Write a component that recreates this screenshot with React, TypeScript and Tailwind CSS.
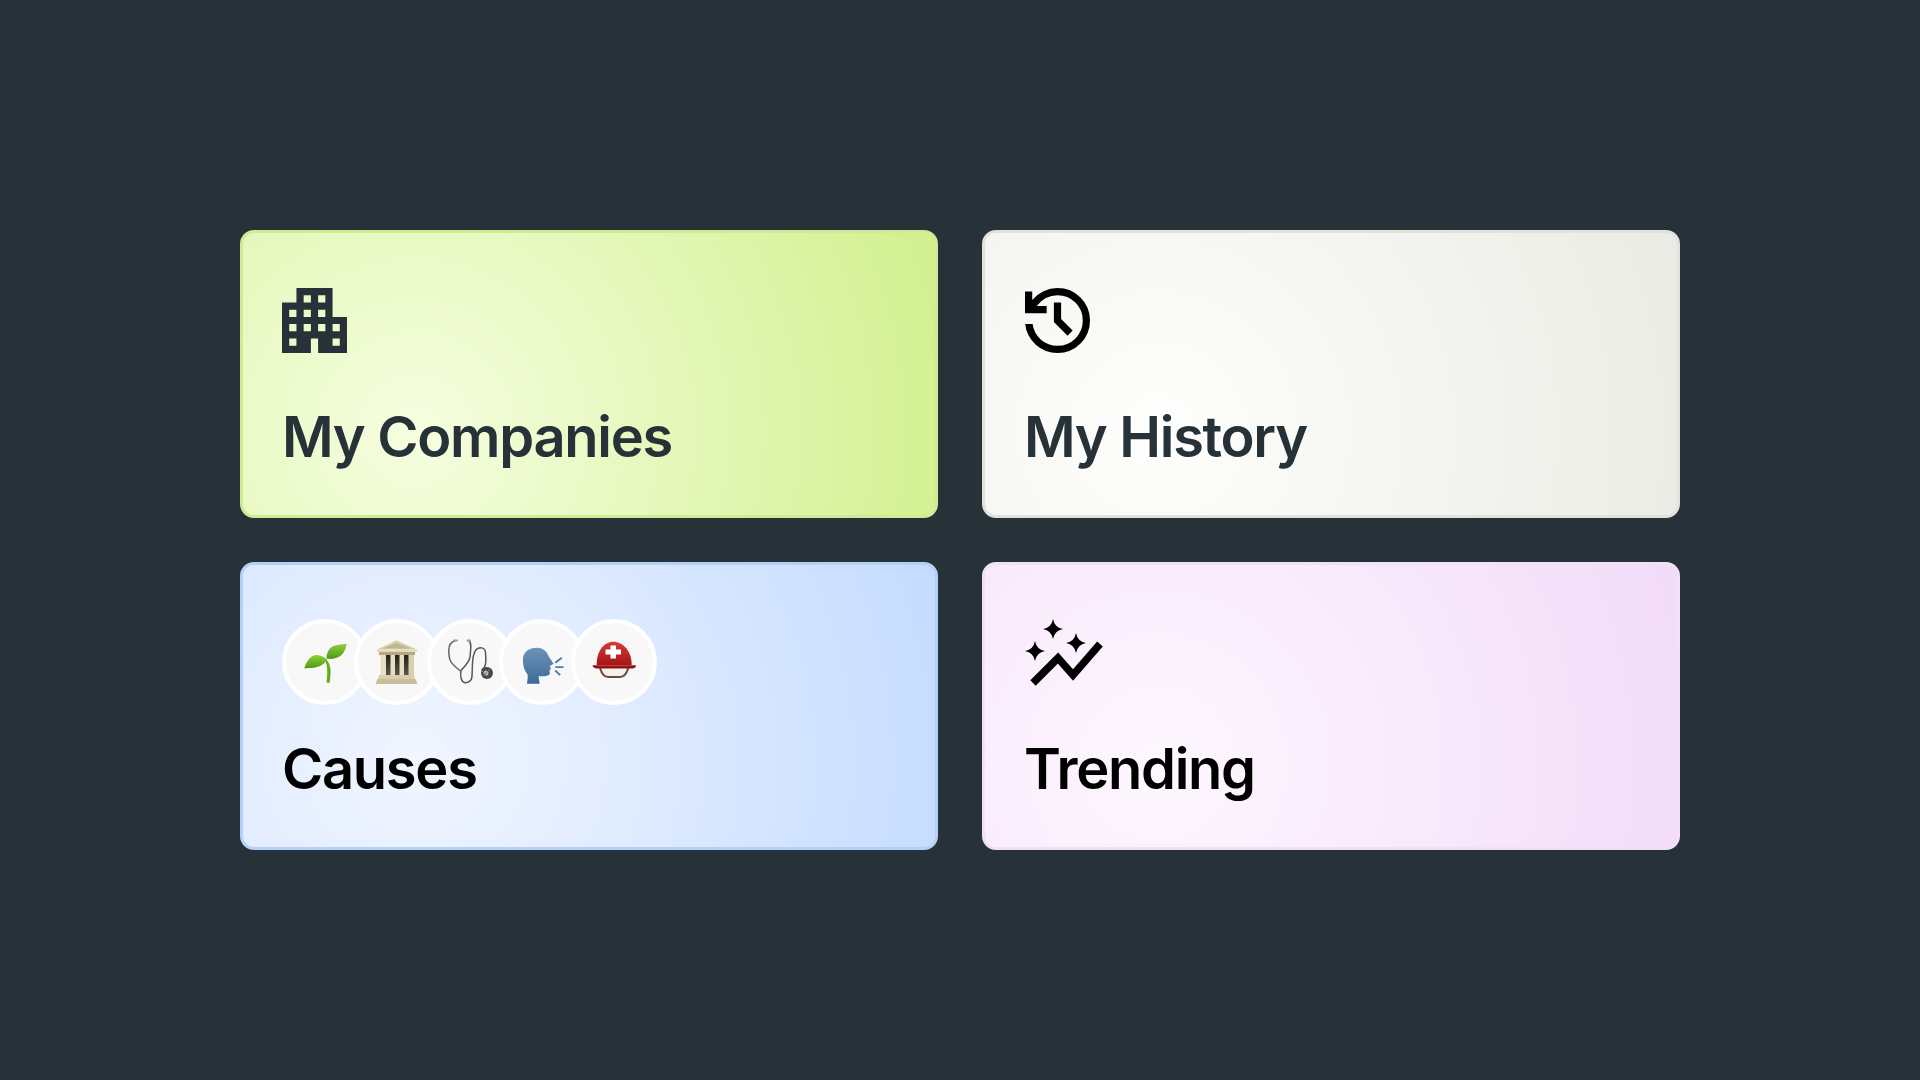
import type { ReactNode } from "react";

const ink = "#263238";

function Building() {
  return (
    <svg viewBox="120 -840 720 720" className="h-[65px] w-[65px]" fill={ink} aria-hidden>
      <path
        fillRule="evenodd"
        d="M120-120v-560h160v-160h400v320h160v400H520v-160h-80v160H120Zm80-80h80v-80h-80v80Zm0-160h80v-80h-80v80Zm0-160h80v-80h-80v80Zm160 160h80v-80h-80v80Zm0-160h80v-80h-80v80Zm0-160h80v-80h-80v80Zm160 320h80v-80h-80v80Zm0-160h80v-80h-80v80Zm0-160h80v-80h-80v80Zm160 480h80v-80h-80v80Zm0-160h80v-80h-80v80Z"
      />
    </svg>
  );
}

function History() {
  return (
    <svg viewBox="120 -840 720 720" className="h-[65px] w-[65px]" fill="#000" aria-hidden>
      <path d="M480-120q-138 0-240.5-91.5T122-440h82q14 104 92.5 172T480-200q117 0 198.5-81.5T760-480q0-117-81.5-198.5T480-760q-69 0-129 32t-101 88h110v80H120v-240h80v94q51-64 124.5-99T480-840q150 0 255 105t105 255q0 150-105 255T480-120Zm112-192L440-464v-216h80v184l128 128-56 56Z" />
    </svg>
  );
}

function Trending() {
  return (
    <svg viewBox="0 0 78 68" className="h-[68px] w-[78px]" aria-hidden>
      <path d="M28 0q1.500 8.500 10 10q-8.500 1.500-10 10q-1.500-8.500-10-10q8.500-1.500 10-10Z" />
      <path d="M10 22q1.500 8.500 10 10q-8.500 1.500-10 10q-1.500-8.500-10-10q8.500-1.500 10-10Z" />
      <path d="M51 14q1.500 8.500 10 10q-8.500 1.500-10 10q-1.500-8.500-10-10q8.500-1.500 10-10Z" />
      <path d="M8 64 33 39 48 56 75 25" fill="none" stroke="#000" strokeWidth="7.500" />
    </svg>
  );
}

function Seedling() {
  return (
    <svg viewBox="0 0 48 48" className="h-12 w-12" aria-hidden>
      <defs>
        <linearGradient id="leaf" x1="0" y1="0" x2="0" y2="1">
          <stop offset="0" stopColor="#8fd03c" />
          <stop offset="1" stopColor="#4c9a10" />
        </linearGradient>
      </defs>
      <path d="M25 21C29 26 30 30 29.500 36C29.300 39 29 42 28.500 45L25.500 44.500C26.500 38 27 28 24 22Z" fill="#62ad18" />
      <path d="M3.300 30.500C5 24 9 18 14 17.200C19 16.500 23 19 26 21.500C24 26 19 28.500 14 29.500C10 30.200 6 30 3.300 30.500Z" fill="url(#leaf)" />
      <path d="M25.500 20.500C25.500 15 28 10 32 8.200C36 6.500 41 6.500 45.700 5.800C45 10 43.500 14.500 40 17.500C36 20.800 30 21.500 25.500 20.500Z" fill="url(#leaf)" />
    </svg>
  );
}

function Bank() {
  return (
    <svg viewBox="0 0 48 48" className="h-12 w-12" aria-hidden>
      <defs>
        <linearGradient id="gap" x1="0" y1="0" x2="0" y2="1">
          <stop offset="0" stopColor="#25211b" />
          <stop offset="1" stopColor="#5c5546" />
        </linearGradient>
      </defs>
      <path d="M23.500 2.500 44 11.500H4Z" fill="#d8cda8" />
      <path d="M23.500 5 37 10.500H10Z" fill="#c2b68f" />
      <rect x="4" y="11.500" width="40" height="2.500" fill="#e3dbbd" />
      <rect x="6" y="14" width="36" height="3" fill="#b3a883" />
      <rect x="8" y="17" width="32" height="20" fill="url(#gap)" />
      <rect x="7.500" y="17" width="5.500" height="20" fill="#e6dfc6" />
      <rect x="17.500" y="17" width="4.500" height="20" fill="#e6dfc6" />
      <rect x="26.500" y="17" width="4.500" height="20" fill="#e6dfc6" />
      <rect x="35.500" y="17" width="5.500" height="20" fill="#d8cfb0" />
      <path d="M6 37H41L42 41H5Z" fill="#d8cfb0" />
      <path d="M4.500 41H42.500L44.500 46H2.500Z" fill="#c9be98" />
    </svg>
  );
}

function Stethoscope() {
  return (
    <svg viewBox="0 0 48 48" className="h-12 w-12" fill="none" strokeLinecap="round" aria-hidden>
      <path d="M9.500 2.500C5 4 2.800 8 2.800 12C2.800 17 3 20 4.500 23C6.500 27 11 30 13.800 32.500" stroke="#63676b" strokeWidth="1.500" />
      <path d="M22.800 2.500C24.500 4 25 6 24.800 9C24.500 13 24.500 17 23.800 20C22.500 25 18 29 15 32.500C14.500 35 14.500 38 15 40C16 43.500 18 45 20 44.800C24 44 26 41 26 38C26.500 30 26 22 27.800 16.500C29 12 32 9.800 34.500 9.800C37.500 9.800 39.500 12 39.500 14.800C40 19 40 23 39.500 26.500C39 29 37.500 30.500 36 31.500" stroke="#55595d" strokeWidth="1.500" />
      <path d="M8 2.500H11M21.500 2.500H24" stroke="#9a9ea2" strokeWidth="2" />
      <circle cx="41" cy="35" r="6" fill="#45484b" />
      <circle cx="40" cy="35" r="2.500" fill="#b9bbbd" />
      <path d="M36 33 41 38M44 31 38 37" stroke="#85888b" strokeWidth="1" />
    </svg>
  );
}

function SpeakingHead() {
  return (
    <svg viewBox="0 0 48 48" className="h-12 w-12" aria-hidden>
      <defs>
        <linearGradient id="head" x1="0" y1="0" x2="0" y2="1">
          <stop offset="0" stopColor="#6f93b9" />
          <stop offset="1" stopColor="#3d6a98" />
        </linearGradient>
      </defs>
      <path
        d="M4.900 21.500C5 14 11 9.800 18.900 9.800C24 9.800 29 13 30.600 18.200L35.600 25.800L31.600 28.200L33 30.500L31.500 33L32 35.500C31.500 38 26 38.500 20.600 38.200L21.600 45.800H8.900C9.500 42 10 39 9.600 36.500C6.500 33 4.800 28 4.900 21.500Z"
        fill="url(#head)"
      />
      <path d="M37.200 24.800 43.900 19.800M37.200 29.200H45.600M37.200 32.500 42.200 37.200" stroke="#4f7aa6" strokeWidth="1.800" fill="none" />
    </svg>
  );
}

function Helmet() {
  return (
    <svg viewBox="0 0 48 48" className="h-12 w-12" aria-hidden>
      <defs>
        <linearGradient id="dome" x1="0" y1="0" x2="0" y2="1">
          <stop offset="0" stopColor="#d8393a" />
          <stop offset="1" stopColor="#a51616" />
        </linearGradient>
      </defs>
      <path d="M10 30C11.500 35 14 39 18 39H30C34 39 36.800 35 38.300 30" fill="#f5f1ee" stroke="#6b4a3a" strokeWidth="2" />
      <path d="M6.700 27C6.500 13 14 3.800 23.300 3.800C33 3.800 41.700 13 41.700 27Z" fill="url(#dome)" />
      <path d="M2.700 27.200H46C46 29 45 30.500 41 30.500H8C4 30.500 2.700 29 2.700 27.200Z" fill="#96110f" />
      <path d="M20.500 7.500H26V11.500H31V16.500H26V20.500H20.500V16.500H15.500V11.500H20.500Z" fill="#fff" />
    </svg>
  );
}

const causes = [Seedling, Bank, Stethoscope, SpeakingHead, Helmet];

function Card({ bg, title, dark, children }: { bg: string; title: string; dark?: boolean; children: ReactNode }) {
  return (
    <div className={`flex h-[288px] flex-col rounded-[14px] border-[3px] pl-[39px] pt-[54px] ${bg}`}>
      <div className="flex h-[86px] items-start">{children}</div>
      <h2 className={`mt-[29px] text-[56px] leading-[70px] font-semibold tracking-[-0.023em] ${dark ? "text-[#263238]" : "text-black"}`}>
        {title}
      </h2>
    </div>
  );
}

export default function App() {
  return (
    <div className="flex min-h-screen items-center justify-center bg-[#263238] font-['Inter',sans-serif]">
      <div className="grid w-[1440px] grid-cols-2 gap-[44px]">
        <Card
          dark
          title="My Companies"
          bg="border-[#cfeb97] bg-[radial-gradient(circle_at_25%_70%,#f6fee0_0%,#d1f08e_100%)]"
        >
          <div className="mt-[1px]"><Building /></div>
        </Card>
        <Card
          dark
          title="My History"
          bg="border-[#e0e2db] bg-[radial-gradient(circle_at_25%_70%,#fefffc_0%,#e9ebe4_100%)]"
        >
          <div className="ml-[1px] mt-[1px]"><History /></div>
        </Card>
        <Card
          title="Causes"
          bg="border-[#b3d1f7] bg-[radial-gradient(circle_at_25%_70%,#f1f6ff_0%,#c5dbff_100%)]"
        >
          <div className="flex">
            {causes.map((Icon, i) => (
              <div
                key={i}
                className="-mr-[13.750px] flex h-[86px] w-[86px] items-center justify-center rounded-full border-[4px] border-white bg-[#f8f8f8]"
              >
                <Icon />
              </div>
            ))}
          </div>
        </Card>
        <Card
          title="Trending"
          bg="border-[#f3e0f8] bg-[radial-gradient(circle_at_25%_70%,#fef7ff_0%,#f2dbf8_100%)]"
        >
          <div className="ml-[1px]"><Trending /></div>
        </Card>
      </div>
    </div>
  );
}
